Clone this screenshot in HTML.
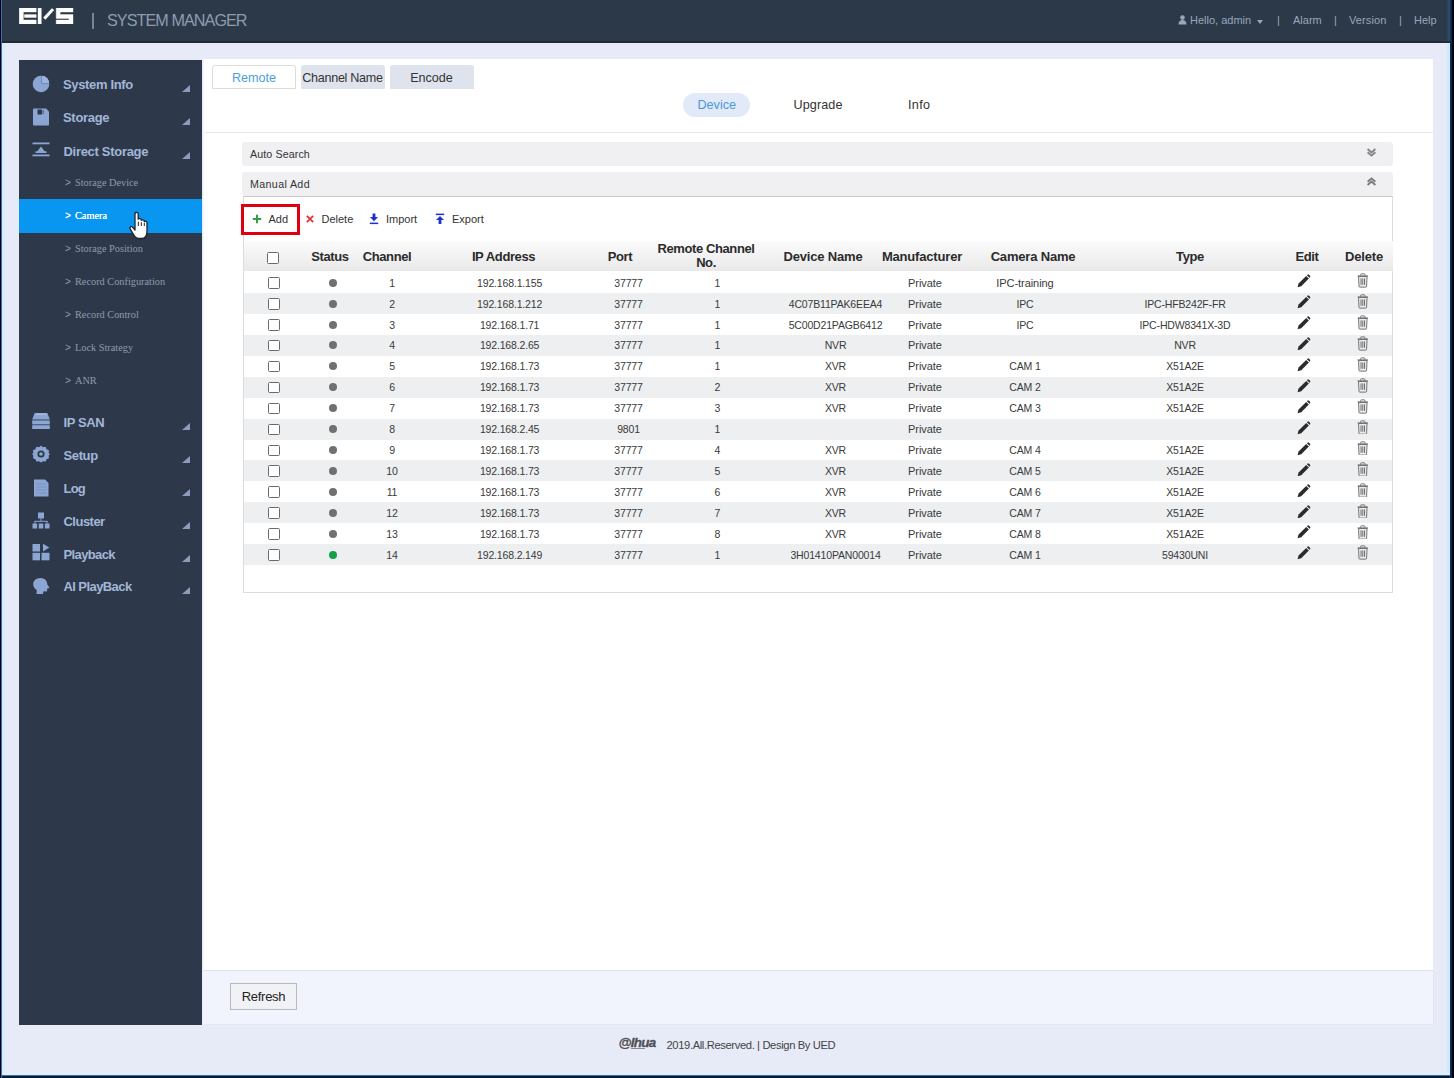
<!DOCTYPE html>
<html lang="en">
<head>
<meta charset="utf-8">
<title>EVS System Manager</title>
<style>
*{box-sizing:border-box;margin:0;padding:0}
html,body{width:1454px;height:1078px;overflow:hidden}
body{position:relative;background:#e6ebf7;font-family:"Liberation Sans",sans-serif;font-size:11px;color:#333}
.abs{position:absolute}
#frameL{position:absolute;left:0;top:0;width:2px;height:1078px;background:linear-gradient(90deg,#02021c 0,#02021c 1px,#2f5f8f 1px,#4a7fae 2px)}
#frameL2{position:absolute;left:2px;top:43px;width:4px;height:1032px;background:linear-gradient(90deg,#d3edff 0,#dcecfb 2px,#e6ebf7 4px)}
#frameR{position:absolute;right:0;top:0;width:4px;height:1078px;background:linear-gradient(270deg,#00040e 0,#00040e 2px,#0a2342 2px,#143458 4px)}
#frameR2{position:absolute;right:4px;top:43px;width:5px;height:1032px;background:linear-gradient(270deg,#cfe8fc 0,#d6ebfc 3px,#e6ebf7 5px)}
#frameR3{position:absolute;right:4px;top:0;width:4px;height:41px;background:linear-gradient(270deg,#2f4f70 0,#2c3f55 3px,#2c3949 4px)}
#frameB{position:absolute;left:0;bottom:0;width:1454px;height:5px;background:linear-gradient(0deg,#031a36 0,#04203f 2px,#3f709c 2.5px,#dcecfd 3px,#e4eefe 4px,#e6ebf7 5px)}
#hdr{position:absolute;left:0;top:0;width:1454px;height:43px;background:#2c3949;border-bottom:2px solid #1f2a3a}
#side{position:absolute;left:19px;top:59.5px;width:183.2px;height:965.5px;background:#2d394a}
#main{position:absolute;left:203px;top:59px;width:1230px;height:966px;background:#fff;border-left:1px solid #f3f5fb}
.mi{position:absolute;left:0;width:183px;height:33px}
.mi b{position:absolute;left:44.5px;top:0;line-height:33px;font-size:13px;font-weight:bold;color:#a2b6d8;letter-spacing:-0.25px;white-space:nowrap}
.mi .ar{position:absolute;left:162.5px;top:17.3px;width:0;height:0;border-left:8px solid transparent;border-bottom:7px solid #8b9cbe}
.mi svg{position:absolute;left:13px;top:7px}
.si{position:absolute;left:0;width:183.2px;height:33px;font-family:"Liberation Serif",serif;font-size:10.3px;color:#8d99ad;line-height:34px;white-space:nowrap}
.si i{position:absolute;left:46px;top:0;font-style:normal;font-family:"Liberation Sans",sans-serif;font-size:10px}
.si span{position:absolute;left:56px;top:0}
.si.act{background:#0996f1;color:#fff;text-shadow:0 0 0.6px #fff}
.tab{position:absolute;top:5.5px;height:24px;line-height:26.5px;text-align:center;font-size:12.6px;color:#333;background:#dfe3ee;border-radius:3px 3px 0 0;white-space:nowrap}
.tab.on{background:#fff;border:1px solid #dcdcdc;color:#4a9fdc;line-height:25px}
.stab{position:absolute;top:34.3px;height:24px;line-height:24px;font-size:12.6px;color:#333;white-space:nowrap}
.bar{position:absolute;left:38px;width:1151px;height:24px;border-radius:3px;background:#f0f0f2;line-height:24px;font-size:10.7px;color:#333;padding-left:8px}
.tb{position:absolute;top:153px;font-size:11px;color:#333;line-height:14px;white-space:nowrap}
.th{position:absolute;font-size:13px;font-weight:bold;color:#2b2b2b;white-space:nowrap;text-align:center;letter-spacing:-0.4px;line-height:13px}
.tr{position:absolute;left:1px;width:1148px;height:20.92px}
.tr.alt{background:#edeff1}
.c{position:absolute;top:0.5px;width:120px;text-align:center;line-height:21px;font-size:10.5px;color:#3a3a3a;white-space:nowrap;letter-spacing:-0.16px}
.c.l{font-size:11px;letter-spacing:-0.06px}
.cb{position:absolute;top:5px;width:11.5px;height:11.5px;border:1px solid #6a6a6a;border-radius:1.5px;background:#fff}
.dot{position:absolute;top:6.5px;width:8px;height:8px;border-radius:50%;background:#707070}
.dot.on{background:#14a048}
.ic{position:absolute;top:3px}
.hl{position:absolute;top:13px;font-size:11px;color:#9aa7ba;white-space:nowrap;line-height:14px}
</style>
</head>
<body>
<svg width="0" height="0" style="position:absolute">
 <defs>
  <g id="pen"><path d="M0.6 14.4 L1.7 10.4 L10 2.1 L12.9 5 L4.6 13.3 Z" fill="#2b2b2b"/><path d="M10.8 1.3 L11.6 0.6 Q12.3 0.1 13 0.8 L14.2 2 Q14.8 2.7 14.2 3.4 L13.6 4.1 Z" fill="#2b2b2b"/></g>
  <g id="bin"><path d="M1.6 3.6 H10.4 L9.9 14 Q9.8 14.6 9.2 14.6 H2.8 Q2.2 14.6 2.1 14 Z" fill="#ececec" stroke="#6e6e6e" stroke-width="1"/><path d="M0.6 3.1 H11.4" stroke="#6e6e6e" stroke-width="1.2" fill="none"/><path d="M3.8 2.8 V1.6 Q3.8 0.9 4.5 0.9 H7.5 Q8.2 0.9 8.2 1.6 V2.8" fill="none" stroke="#6e6e6e" stroke-width="1"/><path d="M4.2 5.6 V12.2 M6 5.6 V12.2 M7.8 5.6 V12.2" stroke="#5a5a5a" stroke-width="0.9" fill="none"/></g>
 </defs>
</svg>

<div id="hdr">
  <svg class="abs" style="left:19px;top:8px" width="55" height="16" viewBox="0 0 55 16">
    <g fill="#fff" stroke="#fff" stroke-width="0.4" stroke-linejoin="round">
      <path d="M0.2 0.1 H17.2 V4 H4.4 V12 H17.2 V16 H0.2 Z"/>
      <rect x="5.4" y="6.6" width="11.8" height="2.9"/>
      <rect x="19" y="0.1" width="3.3" height="15.9"/>
      <path d="M32.9 0.4 L35 2.1 L26.4 11.4 L24.4 9.6 Z"/>
      <path d="M37.2 0.1 H54 V4 H41.2 V6.6 H54 V16 H37.2 V12 H50 V10.4 H37.2 Z"/>
    </g>
  </svg>
  <div class="abs" style="left:92.3px;top:12.5px;width:1.3px;height:16.5px;background:#76849a"></div>
  <div class="abs" id="sysm" style="left:107px;top:9px;font-size:16.2px;line-height:22px;color:#8f9bb0;letter-spacing:-0.95px;white-space:nowrap">SYSTEM MANAGER</div>
  <svg class="abs" style="left:1178px;top:15px" width="9" height="10" viewBox="0 0 9 10"><circle cx="4.5" cy="2.6" r="2.3" fill="#9aa7ba"/><path d="M0.5 9.5 Q0.5 5 4.5 5 Q8.5 5 8.5 9.5 Z" fill="#9aa7ba"/></svg>
  <div class="hl" id="h1" style="left:1190px">Hello, admin</div>
  <div class="abs" style="left:1257px;top:20.3px;width:0;height:0;border-left:3.5px solid transparent;border-right:3.5px solid transparent;border-top:4px solid #9aa7ba"></div>
  <div class="hl" style="left:1277px">|</div>
  <div class="hl" id="h2" style="left:1293px">Alarm</div>
  <div class="hl" style="left:1334px">|</div>
  <div class="hl" id="h3" style="left:1349px;letter-spacing:0.1px">Version</div>
  <div class="hl" style="left:1399px">|</div>
  <div class="hl" id="h4" style="left:1414px">Help</div>
</div>

<div id="side">
  <div class="mi" style="top:8px"><svg width="18" height="18" viewBox="0 0 18 18"><circle cx="9" cy="9" r="8.3" fill="#8ca6d3"/><path d="M9.6 1 V8.6 H17" fill="none" stroke="#6484bb" stroke-width="0.9"/><path d="M10.2 0.8 A8.3 8.3 0 0 1 17.2 8 H10.2 Z" fill="#9db4dc"/></svg><b style="letter-spacing:-0.34px;left:44px">System Info</b><i class="ar"></i></div>
  <div class="mi" style="top:41px"><svg width="18" height="18" viewBox="0 0 18 18"><path d="M1 1.5 Q1 0.5 2 0.5 H14 L17 3.5 V16.5 Q17 17.5 16 17.5 H2 Q1 17.5 1 16.5 Z" fill="#8ca6d3"/><rect x="5.5" y="1.5" width="4.5" height="5" fill="#2d394a"/><rect x="10.5" y="2" width="1.5" height="4" fill="#2d394a" opacity=".5"/></svg><b style="letter-spacing:-0.3px;left:44px">Storage</b><i class="ar"></i></div>
  <div class="mi" style="top:75px"><svg style="top:6px" width="18" height="18" viewBox="0 0 18 18"><rect x="0.5" y="1.5" width="17" height="1.8" fill="#8ca6d3"/><rect x="0.5" y="13.5" width="17" height="1.8" fill="#8ca6d3"/><path d="M4 12 L9 5.5 L14 12 Z" fill="#8ca6d3"/><rect x="3.5" y="10.3" width="11" height="1.7" fill="#8ca6d3"/></svg><b style="letter-spacing:-0.3px">Direct Storage</b><i class="ar"></i></div>
  <div class="si" style="top:106.5px"><i>&gt;</i><span>Storage Device</span></div>
  <div class="si act" style="top:139.5px;height:34px"><i>&gt;</i><span>Camera</span></div>
  <div class="si" style="top:172px"><i>&gt;</i><span>Storage Position</span></div>
  <div class="si" style="top:205px"><i>&gt;</i><span>Record Configuration</span></div>
  <div class="si" style="top:238px"><i>&gt;</i><span>Record Control</span></div>
  <div class="si" style="top:271px"><i>&gt;</i><span>Lock Strategy</span></div>
  <div class="si" style="top:304px"><i>&gt;</i><span>ANR</span></div>
  <div class="mi" style="top:346px"><svg width="18" height="18" viewBox="0 0 18 18"><path d="M3 -1 H15 L17.8 6.6 H0.2 Z" fill="#8ca6d3"/><rect x="0.2" y="7.4" width="17.6" height="4" fill="#8ca6d3"/><rect x="0.2" y="12.2" width="17.6" height="3.8" fill="#8ca6d3"/><rect x="4" y="0.6" width="10" height="1.2" fill="#a9bde0"/></svg><b style="letter-spacing:-0.41px">IP SAN</b><i class="ar"></i></div>
  <div class="mi" style="top:379px"><svg style="top:6px" width="18" height="18" viewBox="0 0 18 18"><path d="M9 0.5 L11 2.2 L13.6 1.8 L14.6 4.2 L17 5.2 L16.6 7.8 L17.8 9 L16.6 10.8 L17 13.2 L14.6 14.2 L13.6 16.6 L11 16.2 L9 17.6 L7 16.2 L4.4 16.6 L3.4 14.2 L1 13.2 L1.4 10.8 L0.2 9 L1.4 7.8 L1 5.2 L3.4 4.2 L4.4 1.8 L7 2.2 Z" fill="#8ca6d3"/><circle cx="9" cy="9" r="3.6" fill="#2d394a"/><circle cx="9" cy="9" r="1.8" fill="#8ca6d3"/></svg><b style="letter-spacing:-0.38px">Setup</b><i class="ar"></i></div>
  <div class="mi" style="top:412px"><svg width="18" height="18" viewBox="0 0 18 18"><path d="M2 0.5 H13 L16.5 4 V17.5 H2 Z" fill="#8ca6d3"/><path d="M4 5 H14 M4 8 H14 M4 11 H14 M4 14 H14" stroke="#7b95c2" stroke-width="1"/></svg><b style="letter-spacing:-0.8px">Log</b><i class="ar"></i></div>
  <div class="mi" style="top:445px"><svg width="18" height="18" viewBox="0 0 18 18"><rect x="6" y="0.5" width="6" height="6" fill="#8ca6d3"/><rect x="8.5" y="6.5" width="1" height="3" fill="#8ca6d3"/><rect x="2.5" y="8.8" width="13" height="1" fill="#8ca6d3"/><rect x="2.5" y="9" width="1" height="2.5" fill="#8ca6d3"/><rect x="14.5" y="9" width="1" height="2.5" fill="#8ca6d3"/><rect x="0.5" y="11.5" width="4.6" height="5" fill="#8ca6d3"/><rect x="6.7" y="11.5" width="4.6" height="5" fill="#8ca6d3"/><rect x="12.9" y="11.5" width="4.6" height="5" fill="#8ca6d3"/></svg><b style="letter-spacing:-0.52px">Cluster</b><i class="ar"></i></div>
  <div class="mi" style="top:478px"><svg style="top:5.5px" width="18" height="18" viewBox="0 0 18 18"><rect x="0.5" y="1" width="7.5" height="7.5" fill="#8ca6d3"/><rect x="0.5" y="9.8" width="7.5" height="7.5" fill="#8ca6d3"/><rect x="9.5" y="9.8" width="8" height="7.5" fill="#8ca6d3"/><path d="M11 0.8 L17.3 4.6 L11 8.4 Z" fill="#8ca6d3"/></svg><b style="letter-spacing:-0.62px">Playback</b><i class="ar"></i></div>
  <div class="mi" style="top:510.5px"><svg width="18" height="18" viewBox="0 0 18 18"><path d="M8.5 1 C12.5 1 15.2 3.8 15.2 7.2 L17.5 11 L15.3 11.6 L15 14.6 L11.5 14.2 L11 17 H4.5 L4.8 13 C2.5 11.6 1.2 9.6 1.2 7.2 C1.2 3.8 4.2 1 8.5 1 Z" fill="#8ca6d3"/></svg><b style="letter-spacing:-0.58px">AI PlayBack</b><i class="ar"></i></div>
  <!-- hand cursor -->
  <svg class="abs" style="left:109px;top:151.5px" width="22" height="30" viewBox="0 0 22 30">
    <path d="M7 2.4 C7 1 10.2 1 10.2 2.4 V8.2 C10.4 7.2 13.2 7.3 13.3 8.6 V9.4 C13.6 8.5 16.2 8.7 16.3 9.9 V10.8 C16.7 10 19 10.3 19 11.5 V20 C19 24 17.5 27.5 13.5 27.5 H10.5 C7.8 27.5 6.6 25.5 5.4 23.4 L2 17.6 C1.2 16.2 3.4 14.8 4.6 16.2 L7 19 Z" fill="#fff" stroke="#1b2430" stroke-width="1.3" stroke-linejoin="round"/>
    <path d="M10.3 10.6 V15 M13.3 11.2 V15 M16.3 12 V15" stroke="#1b2430" stroke-width="1"/>
  </svg>
</div>

<div id="main">
  <div class="tab on" style="left:8px;width:84px">Remote</div>
  <div class="tab" style="left:96.5px;width:84px;letter-spacing:-0.3px">Channel Name</div>
  <div class="tab" style="left:185.5px;width:84px">Encode</div>

  <div class="abs" style="left:479px;top:34px;width:67px;height:24px;border-radius:12px;background:#e2e9f8"></div>
  <div class="stab" id="st1" style="left:493.5px;color:#4a9ad6">Device</div>
  <div class="stab" id="st2" style="left:589.5px;letter-spacing:0.1px">Upgrade</div>
  <div class="stab" id="st3" style="left:704px;letter-spacing:0.35px">Info</div>

  <div class="abs" style="left:1px;top:72.5px;width:1228px;height:1.5px;background:#e6e6e8"></div>

  <div class="bar" style="top:83px;letter-spacing:0.1px">Auto Search
    <svg class="abs" style="left:1125px;top:6px" width="9" height="9" viewBox="0 0 9 9"><path d="M0.6 1 L4.5 4.4 L8.4 1 M0.6 4.2 L4.5 7.6 L8.4 4.2" fill="none" stroke="#858585" stroke-width="1.9"/></svg>
  </div>
  <div class="bar" style="top:113px;letter-spacing:0.35px">Manual Add
    <svg class="abs" style="left:1125px;top:5px" width="9" height="9" viewBox="0 0 9 9"><path d="M0.6 4.8 L4.5 1.4 L8.4 4.8 M0.6 8 L4.5 4.6 L8.4 8" fill="none" stroke="#7a7a7a" stroke-width="1.9"/></svg>
  </div>

  <!-- panel -->
  <div class="abs" id="panel" style="left:39px;top:137px;width:1150px;height:396.5px;border:1px solid #dcdcdc;border-top-color:#c9c9c9;background:#fff">
  </div>

  <!-- toolbar -->
  <div class="abs" style="left:37px;top:145px;width:59px;height:30.5px;border:3.5px solid #e1000f"></div>
  <svg class="abs" style="left:47.5px;top:155px" width="10" height="10" viewBox="0 0 10 10"><path d="M5 0.8 V9.2 M0.8 5 H9.2" stroke="#2f9e44" stroke-width="2"/></svg>
  <div class="tb" id="t1" style="left:64.5px">Add</div>
  <svg class="abs" style="left:101.5px;top:156px" width="8" height="8" viewBox="0 0 8 8"><path d="M0.8 0.8 L7.2 7.2 M7.2 0.8 L0.8 7.2" stroke="#e03030" stroke-width="1.7"/></svg>
  <div class="tb" id="t2" style="left:117.5px">Delete</div>
  <svg class="abs" style="left:164.5px;top:154px" width="10" height="12" viewBox="0 0 10 12"><path d="M3.6 0.5 H6.4 V4 H9 L5 8.2 L1 4 H3.6 Z" fill="#1f2fd0"/><rect x="0.8" y="9.6" width="8.4" height="1.5" fill="#1f2fd0"/></svg>
  <div class="tb" id="t3" style="left:182px">Import</div>
  <svg class="abs" style="left:230.5px;top:154px" width="10" height="12" viewBox="0 0 10 12"><rect x="0.8" y="0.6" width="8.4" height="1.5" fill="#1f2fd0"/><path d="M5 3 L9 7 H6.4 V11 H3.6 V7 H1 Z" fill="#1f2fd0"/></svg>
  <div class="tb" id="t4" style="left:248px">Export</div>

  <!-- table header -->
  <div class="abs" id="thead" style="left:40px;top:181.5px;width:1149px;height:30px;background:linear-gradient(180deg,#fbfbfb 0,#f3f3f3 45%,#e9e9ea 100%)"></div>
  <i class="cb" style="left:63px;top:192.5px;width:12px;height:12px"></i>
  <div class="th" id="th1" style="left:66px;top:191px;width:120px">Status</div>
  <div class="th" id="th2" style="left:123px;top:191px;width:120px">Channel</div>
  <div class="th" id="th3" style="left:239.5px;top:191px;width:120px">IP Address</div>
  <div class="th" id="th4" style="left:356px;top:191px;width:120px">Port</div>
  <div class="th" id="th5" style="left:442px;top:183px;width:120px;line-height:14px">Remote Channel<br>No.</div>
  <div class="th" id="th6" style="letter-spacing:-0.18px;left:559px;top:191px;width:120px">Device Name</div>
  <div class="th" id="th7" style="letter-spacing:-0.18px;left:658px;top:191px;width:120px">Manufacturer</div>
  <div class="th" id="th8" style="letter-spacing:-0.18px;left:769px;top:191px;width:120px">Camera Name</div>
  <div class="th" id="th9" style="left:926px;top:191px;width:120px">Type</div>
  <div class="th" id="th10" style="left:1043px;top:191px;width:120px">Edit</div>
  <div class="th" id="th11" style="letter-spacing:-0.18px;left:1100px;top:191px;width:120px">Delete</div>

  <div class="abs" id="tbody" style="left:39px;top:-59px;width:1150px;height:0">
<div class="tr" style="top:272.20px"><i class="cb" style="left:24.100000000000023px"></i><i class="dot" style="left:84.60000000000002px"></i><span class="c" style="left:88px">1</span><span class="c" style="left:205.60000000000002px">192.168.1.155</span><span class="c" style="left:324.5px">37777</span><span class="c" style="left:413.29999999999995px">1</span><span class="c l" style="left:621px">Private</span><span class="c l" style="left:721px">IPC-training</span><svg class="ic" style="left:1052.8px;top:2.2px" width="13.8" height="13.8" viewBox="0 0 15 15"><use href="#pen"/></svg><svg class="ic" style="left:1113.0px;top:1.3px" width="11.6" height="14.5" viewBox="0 0 12 15"><use href="#bin"/></svg></div>
<div class="tr alt" style="top:293.12px"><i class="cb" style="left:24.100000000000023px"></i><i class="dot" style="left:84.60000000000002px"></i><span class="c" style="left:88px">2</span><span class="c" style="left:205.60000000000002px">192.168.1.212</span><span class="c" style="left:324.5px">37777</span><span class="c" style="left:413.29999999999995px">1</span><span class="c" style="left:531.5px">4C07B11PAK6EEA4</span><span class="c l" style="left:621px">Private</span><span class="c" style="left:721px">IPC</span><span class="c" style="left:881px">IPC-HFB242F-FR</span><svg class="ic" style="left:1052.8px;top:2.2px" width="13.8" height="13.8" viewBox="0 0 15 15"><use href="#pen"/></svg><svg class="ic" style="left:1113.0px;top:1.3px" width="11.6" height="14.5" viewBox="0 0 12 15"><use href="#bin"/></svg></div>
<div class="tr" style="top:314.04px"><i class="cb" style="left:24.100000000000023px"></i><i class="dot" style="left:84.60000000000002px"></i><span class="c" style="left:88px">3</span><span class="c" style="left:205.60000000000002px">192.168.1.71</span><span class="c" style="left:324.5px">37777</span><span class="c" style="left:413.29999999999995px">1</span><span class="c" style="left:531.5px">5C00D21PAGB6412</span><span class="c l" style="left:621px">Private</span><span class="c" style="left:721px">IPC</span><span class="c" style="left:881px">IPC-HDW8341X-3D</span><svg class="ic" style="left:1052.8px;top:2.2px" width="13.8" height="13.8" viewBox="0 0 15 15"><use href="#pen"/></svg><svg class="ic" style="left:1113.0px;top:1.3px" width="11.6" height="14.5" viewBox="0 0 12 15"><use href="#bin"/></svg></div>
<div class="tr alt" style="top:334.96px"><i class="cb" style="left:24.100000000000023px"></i><i class="dot" style="left:84.60000000000002px"></i><span class="c" style="left:88px">4</span><span class="c" style="left:205.60000000000002px">192.168.2.65</span><span class="c" style="left:324.5px">37777</span><span class="c" style="left:413.29999999999995px">1</span><span class="c" style="left:531.5px">NVR</span><span class="c l" style="left:621px">Private</span><span class="c" style="left:881px">NVR</span><svg class="ic" style="left:1052.8px;top:2.2px" width="13.8" height="13.8" viewBox="0 0 15 15"><use href="#pen"/></svg><svg class="ic" style="left:1113.0px;top:1.3px" width="11.6" height="14.5" viewBox="0 0 12 15"><use href="#bin"/></svg></div>
<div class="tr" style="top:355.88px"><i class="cb" style="left:24.100000000000023px"></i><i class="dot" style="left:84.60000000000002px"></i><span class="c" style="left:88px">5</span><span class="c" style="left:205.60000000000002px">192.168.1.73</span><span class="c" style="left:324.5px">37777</span><span class="c" style="left:413.29999999999995px">1</span><span class="c" style="left:531.5px">XVR</span><span class="c l" style="left:621px">Private</span><span class="c" style="left:721px">CAM 1</span><span class="c" style="left:881px">X51A2E</span><svg class="ic" style="left:1052.8px;top:2.2px" width="13.8" height="13.8" viewBox="0 0 15 15"><use href="#pen"/></svg><svg class="ic" style="left:1113.0px;top:1.3px" width="11.6" height="14.5" viewBox="0 0 12 15"><use href="#bin"/></svg></div>
<div class="tr alt" style="top:376.80px"><i class="cb" style="left:24.100000000000023px"></i><i class="dot" style="left:84.60000000000002px"></i><span class="c" style="left:88px">6</span><span class="c" style="left:205.60000000000002px">192.168.1.73</span><span class="c" style="left:324.5px">37777</span><span class="c" style="left:413.29999999999995px">2</span><span class="c" style="left:531.5px">XVR</span><span class="c l" style="left:621px">Private</span><span class="c" style="left:721px">CAM 2</span><span class="c" style="left:881px">X51A2E</span><svg class="ic" style="left:1052.8px;top:2.2px" width="13.8" height="13.8" viewBox="0 0 15 15"><use href="#pen"/></svg><svg class="ic" style="left:1113.0px;top:1.3px" width="11.6" height="14.5" viewBox="0 0 12 15"><use href="#bin"/></svg></div>
<div class="tr" style="top:397.72px"><i class="cb" style="left:24.100000000000023px"></i><i class="dot" style="left:84.60000000000002px"></i><span class="c" style="left:88px">7</span><span class="c" style="left:205.60000000000002px">192.168.1.73</span><span class="c" style="left:324.5px">37777</span><span class="c" style="left:413.29999999999995px">3</span><span class="c" style="left:531.5px">XVR</span><span class="c l" style="left:621px">Private</span><span class="c" style="left:721px">CAM 3</span><span class="c" style="left:881px">X51A2E</span><svg class="ic" style="left:1052.8px;top:2.2px" width="13.8" height="13.8" viewBox="0 0 15 15"><use href="#pen"/></svg><svg class="ic" style="left:1113.0px;top:1.3px" width="11.6" height="14.5" viewBox="0 0 12 15"><use href="#bin"/></svg></div>
<div class="tr alt" style="top:418.64px"><i class="cb" style="left:24.100000000000023px"></i><i class="dot" style="left:84.60000000000002px"></i><span class="c" style="left:88px">8</span><span class="c" style="left:205.60000000000002px">192.168.2.45</span><span class="c" style="left:324.5px">9801</span><span class="c" style="left:413.29999999999995px">1</span><span class="c l" style="left:621px">Private</span><svg class="ic" style="left:1052.8px;top:2.2px" width="13.8" height="13.8" viewBox="0 0 15 15"><use href="#pen"/></svg><svg class="ic" style="left:1113.0px;top:1.3px" width="11.6" height="14.5" viewBox="0 0 12 15"><use href="#bin"/></svg></div>
<div class="tr" style="top:439.56px"><i class="cb" style="left:24.100000000000023px"></i><i class="dot" style="left:84.60000000000002px"></i><span class="c" style="left:88px">9</span><span class="c" style="left:205.60000000000002px">192.168.1.73</span><span class="c" style="left:324.5px">37777</span><span class="c" style="left:413.29999999999995px">4</span><span class="c" style="left:531.5px">XVR</span><span class="c l" style="left:621px">Private</span><span class="c" style="left:721px">CAM 4</span><span class="c" style="left:881px">X51A2E</span><svg class="ic" style="left:1052.8px;top:2.2px" width="13.8" height="13.8" viewBox="0 0 15 15"><use href="#pen"/></svg><svg class="ic" style="left:1113.0px;top:1.3px" width="11.6" height="14.5" viewBox="0 0 12 15"><use href="#bin"/></svg></div>
<div class="tr alt" style="top:460.48px"><i class="cb" style="left:24.100000000000023px"></i><i class="dot" style="left:84.60000000000002px"></i><span class="c" style="left:88px">10</span><span class="c" style="left:205.60000000000002px">192.168.1.73</span><span class="c" style="left:324.5px">37777</span><span class="c" style="left:413.29999999999995px">5</span><span class="c" style="left:531.5px">XVR</span><span class="c l" style="left:621px">Private</span><span class="c" style="left:721px">CAM 5</span><span class="c" style="left:881px">X51A2E</span><svg class="ic" style="left:1052.8px;top:2.2px" width="13.8" height="13.8" viewBox="0 0 15 15"><use href="#pen"/></svg><svg class="ic" style="left:1113.0px;top:1.3px" width="11.6" height="14.5" viewBox="0 0 12 15"><use href="#bin"/></svg></div>
<div class="tr" style="top:481.40px"><i class="cb" style="left:24.100000000000023px"></i><i class="dot" style="left:84.60000000000002px"></i><span class="c" style="left:88px">11</span><span class="c" style="left:205.60000000000002px">192.168.1.73</span><span class="c" style="left:324.5px">37777</span><span class="c" style="left:413.29999999999995px">6</span><span class="c" style="left:531.5px">XVR</span><span class="c l" style="left:621px">Private</span><span class="c" style="left:721px">CAM 6</span><span class="c" style="left:881px">X51A2E</span><svg class="ic" style="left:1052.8px;top:2.2px" width="13.8" height="13.8" viewBox="0 0 15 15"><use href="#pen"/></svg><svg class="ic" style="left:1113.0px;top:1.3px" width="11.6" height="14.5" viewBox="0 0 12 15"><use href="#bin"/></svg></div>
<div class="tr alt" style="top:502.32px"><i class="cb" style="left:24.100000000000023px"></i><i class="dot" style="left:84.60000000000002px"></i><span class="c" style="left:88px">12</span><span class="c" style="left:205.60000000000002px">192.168.1.73</span><span class="c" style="left:324.5px">37777</span><span class="c" style="left:413.29999999999995px">7</span><span class="c" style="left:531.5px">XVR</span><span class="c l" style="left:621px">Private</span><span class="c" style="left:721px">CAM 7</span><span class="c" style="left:881px">X51A2E</span><svg class="ic" style="left:1052.8px;top:2.2px" width="13.8" height="13.8" viewBox="0 0 15 15"><use href="#pen"/></svg><svg class="ic" style="left:1113.0px;top:1.3px" width="11.6" height="14.5" viewBox="0 0 12 15"><use href="#bin"/></svg></div>
<div class="tr" style="top:523.24px"><i class="cb" style="left:24.100000000000023px"></i><i class="dot" style="left:84.60000000000002px"></i><span class="c" style="left:88px">13</span><span class="c" style="left:205.60000000000002px">192.168.1.73</span><span class="c" style="left:324.5px">37777</span><span class="c" style="left:413.29999999999995px">8</span><span class="c" style="left:531.5px">XVR</span><span class="c l" style="left:621px">Private</span><span class="c" style="left:721px">CAM 8</span><span class="c" style="left:881px">X51A2E</span><svg class="ic" style="left:1052.8px;top:2.2px" width="13.8" height="13.8" viewBox="0 0 15 15"><use href="#pen"/></svg><svg class="ic" style="left:1113.0px;top:1.3px" width="11.6" height="14.5" viewBox="0 0 12 15"><use href="#bin"/></svg></div>
<div class="tr alt" style="top:544.16px"><i class="cb" style="left:24.100000000000023px"></i><i class="dot on" style="left:84.60000000000002px"></i><span class="c" style="left:88px">14</span><span class="c" style="left:205.60000000000002px">192.168.2.149</span><span class="c" style="left:324.5px">37777</span><span class="c" style="left:413.29999999999995px">1</span><span class="c" style="left:531.5px">3H01410PAN00014</span><span class="c l" style="left:621px">Private</span><span class="c" style="left:721px">CAM 1</span><span class="c" style="left:881px">59430UNI</span><svg class="ic" style="left:1052.8px;top:2.2px" width="13.8" height="13.8" viewBox="0 0 15 15"><use href="#pen"/></svg><svg class="ic" style="left:1113.0px;top:1.3px" width="11.6" height="14.5" viewBox="0 0 12 15"><use href="#bin"/></svg></div>
  </div>

  <!-- bottom bar -->
  <div class="abs" style="left:0;top:911px;width:1230px;height:55px;background:#f1f4fc;border-top:1px solid #dfe1e8;border-bottom:1px solid #e3e6ef;border-right:1px solid #e3e6ef"></div>
  <div class="abs" id="refresh" style="left:26px;top:924px;width:67px;height:27px;border:1px solid #b9b9bd;background:#f1f2f6;font-size:13px;line-height:25px;text-align:center;color:#222;letter-spacing:-0.3px">Refresh</div>
</div>

<!-- footer -->
<div class="abs" id="dahua" style="left:618.5px;top:1035px;font-size:13.4px;font-weight:bold;font-style:italic;color:#4f4f55;line-height:16px;letter-spacing:-0.75px;-webkit-text-stroke:0.3px #4f4f55">@lhua</div>
<div class="abs" style="left:631px;top:1048px;width:14px;height:1px;background:#8a8a92"></div>
<div class="abs" id="foot" style="left:666.5px;top:1038px;font-size:11.2px;color:#444;line-height:14px;white-space:nowrap;letter-spacing:-0.37px">2019.All.Reserved. | Design By UED</div>

<div id="frameL2"></div><div id="frameR2"></div><div id="frameR3"></div><div id="frameB"></div><div id="frameL"></div><div id="frameR"></div>
</body>
</html>
